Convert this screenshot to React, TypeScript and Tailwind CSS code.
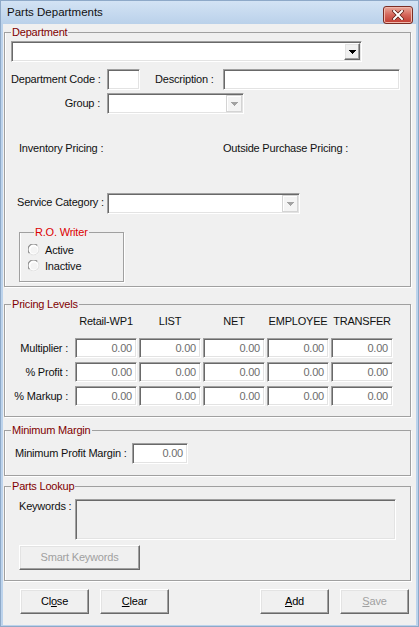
import type { ReactNode } from "react";

const sunken =
  "border border-t-[#a0a0a0] border-l-[#a0a0a0] border-b-white border-r-white shadow-[inset_1px_1px_0_#696969,inset_-1px_-1px_0_#e3e3e3]";
const raised =
  "border border-t-white border-l-white border-b-[#696969] border-r-[#696969] shadow-[inset_-1px_-1px_0_#a0a0a0,inset_1px_1px_0_#e3e3e3] bg-[#f0f0f0]";

function Arrow({ color }: { color: string }) {
  return (
    <svg width="7" height="4" viewBox="0 0 7 4">
      <path d="M0 0h7v1H0zM1 1h5v1H1zM2 2h3v1H2zM3 3h1v1H3z" fill={color} />
    </svg>
  );
}

function Combo({ className, disabled }: { className: string; disabled?: boolean }) {
  return (
    <div className={`${sunken} bg-white h-[21px] flex justify-end p-[1px] ${className}`}>
      <div
        className={`w-[16px] h-full flex items-center justify-center ${
          disabled
            ? "border border-[#d4d4d4] shadow-[inset_1px_1px_0_#fff] bg-[#f4f4f4]"
            : raised
        }`}
      >
        <Arrow color={disabled ? "#a3a3a3" : "#000"} />
      </div>
    </div>
  );
}

function Group({
  title,
  red,
  className,
  children,
}: {
  title: string;
  red?: boolean;
  className: string;
  children: ReactNode;
}) {
  return (
    <fieldset className={`border border-[#a0a0a0] shadow-[1px_1px_0_#fff,inset_1px_0_0_#fff] ${className}`}>
      <legend className={`ml-[6px] px-[1px] leading-[13px] ${red ? "text-[#dc0000]" : "text-[#800000]"}`}>
        {title}
      </legend>
      {children}
    </fieldset>
  );
}

function Radio({ label }: { label: string }) {
  return (
    <div className="h-[16px] flex items-center gap-[5px]">
      <svg width="12" height="12" viewBox="0 0 12 12">
        <circle cx="6" cy="6" r="5.5" fill="#fff" />
        <path d="M1.6 9.4A4.8 4.8 0 0 1 9.4 1.6" fill="none" stroke="#8d8d8d" strokeWidth="1.2" />
        <path d="M9.4 1.6A4.8 4.8 0 0 1 1.6 9.4" fill="none" stroke="#e2e2e2" strokeWidth="1.2" />
        <circle cx="6" cy="6" r="3.6" fill="#f4f4f4" />
      </svg>
      <span>{label}</span>
    </div>
  );
}

function Btn({ children, disabled, className }: { children: ReactNode; disabled?: boolean; className: string }) {
  return (
    <button
      className={`${raised} h-[25px] flex items-center justify-center ${
        disabled ? "text-[#a0a0a0]" : "text-black"
      } ${className}`}
    >
      {children}
    </button>
  );
}

const columns = ["Retail-WP1", "LIST", "NET", "EMPLOYEE", "TRANSFER"];
const rows = ["Multiplier :", "% Profit :", "% Markup :"];

export default function App() {
  return (
    <div className="w-[419px] h-[627px] bg-[#bcd3ec] border border-[#8ea9c8] flex flex-col whitespace-nowrap text-[11px] tracking-[-0.2px] text-[#111] font-['Liberation_Sans',Arial,sans-serif]">
      {/* title bar */}
      <div className="h-[23px] shrink-0 flex items-center justify-between pl-[6px] pr-[5px] bg-gradient-to-b from-[#d3e3f4] to-[#bad1ea]">
        <span className="text-[11.5px] tracking-normal text-[#111]">Parts Departments</span>
        <div className="w-[30px] h-[18px] mt-[4px] rounded-[3px] border border-[#7b2d24] bg-gradient-to-b from-[#e8a89b] via-[#d4655a] to-[#c0392f] flex items-center justify-center shadow-[inset_0_0_0_1px_#f0b8ac]">
          <svg width="12" height="10" viewBox="0 0 12 10">
            <path d="M2 1l8 8M10 1L2 9" stroke="#5a1a12" strokeWidth="3.4" strokeLinecap="square" />
            <path d="M2 1l8 8M10 1L2 9" stroke="#fff" strokeWidth="2" strokeLinecap="square" />
          </svg>
        </div>
      </div>

      {/* client area */}
      <div className="flex-1 mx-[2px] mb-[1px] bg-[#f0f0f0] pt-[2px] pl-[1px] flex flex-col">
        <Group title="Department" className="w-[407px] pb-[4px]">
          <div className="pl-[6px] flex flex-col">
            <Combo className="w-[351px] mt-[2px]" />

            <div className="flex items-center mt-[7px] h-[21px]">
              <span className="w-[96px]">Department Code :</span>
              <div className={`${sunken} bg-white w-[33px] h-[21px]`} />
              <span className="w-[68px] ml-[15px]">Description :</span>
              <div className={`${sunken} bg-white w-[177px] h-[21px]`} />
            </div>

            <div className="flex items-center mt-[3px] h-[21px]">
              <span className="w-[96px] pr-[7px] text-right">Group :</span>
              <Combo className="w-[137px]" disabled />
            </div>

            <div className="flex mt-[28px] pl-[8px] leading-[13px]">
              <span className="w-[204px]">Inventory Pricing :</span>
              <span>Outside Purchase Pricing :</span>
            </div>

            <div className="flex items-center mt-[38px] h-[21px]">
              <span className="w-[96px] pl-[6px] pb-[3px]">Service Category :</span>
              <Combo className="w-[193px]" disabled />
            </div>

            <Group title="R.O. Writer" red className="w-[105px] ml-[8px] mt-[12px] pl-[8px] pb-[7px]">
              <div className="mt-[3px]">
                <Radio label="Active" />
                <Radio label="Inactive" />
              </div>
            </Group>
          </div>
        </Group>

        <Group title="Pricing Levels" className="w-[407px] mt-[11px] pb-[10px]">
          <div className="flex pl-[70px] mt-[4px] gap-[2px] leading-[13px]">
            {columns.map((c) => (
              <span key={c} className="w-[62px] text-center">
                {c}
              </span>
            ))}
          </div>
          <div className="mt-[10px] grid grid-cols-[68px_repeat(5,62px)] gap-x-[2px] gap-y-[4px]">
            {rows.map((r) => (
              <div key={r} className="contents">
                <span className="h-[20px] flex items-center justify-end pr-[5px]">{r}</span>
                {columns.map((c) => (
                  <div
                    key={c}
                    className={`${sunken} bg-white h-[20px] flex items-center justify-end pr-[4px] text-[#6d6d6d]`}
                  >
                    0.00
                  </div>
                ))}
              </div>
            ))}
          </div>
        </Group>

        <Group title="Minimum Margin" className="w-[407px] mt-[7px] pb-[11px]">
          <div className="flex items-center mt-[6px] pl-[10px]">
            <span className="w-[117px]">Minimum Profit Margin :</span>
            <div className={`${sunken} bg-white w-[56px] h-[21px] flex items-center justify-end pr-[4px] text-[#6d6d6d]`}>
              0.00
            </div>
          </div>
        </Group>

        <Group title="Parts Lookup" className="w-[407px] mt-[4px] pb-[10px]">
          <div className="flex mt-[6px] pl-[14px]">
            <span className="w-[56px] leading-[13px] pt-[1px]">Keywords :</span>
            <div className={`${sunken} bg-[#f0f0f0] w-[321px] h-[41px]`} />
          </div>
          <Btn disabled className="w-[121px] ml-[14px] mt-[5px]">
            Smart Keywords
          </Btn>
        </Group>

        <div className="flex mt-[8px] pl-[16px]">
          <Btn className="w-[69px]">
            Cl<span className="underline">o</span>se
          </Btn>
          <Btn className="w-[69px] ml-[11px]">
            <span className="underline">C</span>lear
          </Btn>
          <Btn className="w-[69px] ml-[91px]">
            <span className="underline">A</span>dd
          </Btn>
          <Btn disabled className="w-[69px] ml-[11px]">
            <span className="underline">S</span>ave
          </Btn>
        </div>
      </div>
    </div>
  );
}
